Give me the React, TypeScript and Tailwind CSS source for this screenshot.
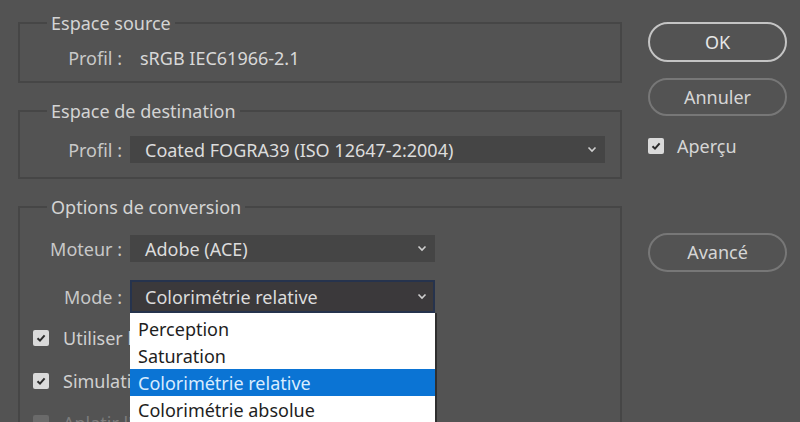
import React from "react";

const font = { fontFamily: '"Noto Sans", "Open Sans", sans-serif' };

function Chevron() {
  return (
    <svg width="10" height="7" viewBox="0 0 10 7" className="shrink-0">
      <polyline points="1.5,1.5 5,5 8.5,1.5" fill="none" stroke="#cfcfcf" strokeWidth="1.6" />
    </svg>
  );
}

function Box({ checked = true, dim = false }: { checked?: boolean; dim?: boolean }) {
  return (
    <div
      className={`w-[16px] h-[16px] rounded-[2px] flex items-center justify-center shrink-0 ${
        dim ? "bg-[#6a6a6a]" : "bg-[#dadada]"
      }`}
    >
      {checked && (
        <svg width="12" height="12" viewBox="0 0 12 12">
          <polyline points="2.5,6.2 5,8.6 9.6,3.4" fill="none" stroke="#2b2b2b" strokeWidth="2" />
        </svg>
      )}
    </div>
  );
}

function Legend({ children }: { children: React.ReactNode }) {
  return (
    <legend className="ml-[27px] px-[4px] text-[18px] leading-[24px] text-[#d4d4d4]">{children}</legend>
  );
}

function Label({ children }: { children: React.ReactNode }) {
  return <div className="w-[102px] text-right text-[18px] leading-[24px] text-[#c8c8c8]">{children}</div>;
}

export default function App() {
  return (
    <div className="w-[800px] h-[422px] bg-[#535353] overflow-hidden flex" style={font}>
      {/* Left column */}
      <div className="w-[604px] ml-[18px] flex flex-col shrink-0">
        <fieldset className="mt-[11px] border-2 border-[#464646] px-0 pt-[11px] pb-[11px]">
          <Legend>Espace source</Legend>
          <div className="flex items-center h-[24px]">
            <Label>Profil :</Label>
            <div className="ml-[18px] text-[18px] leading-[24px] text-[#d8d8d8]">sRGB IEC61966-2.1</div>
          </div>
        </fieldset>

        <fieldset className="mt-[16px] border-2 border-[#464646] pt-[13px] pb-[14px]">
          <Legend>Espace de destination</Legend>
          <div className="flex items-center">
            <Label>Profil :</Label>
            <div className="ml-[8px] w-[475px] h-[27px] bg-[#454545] flex items-center justify-between pl-[15px] pr-[8px]">
              <span className="text-[18px] leading-[24px] text-[#dcdcdc]">Coated FOGRA39 (ISO 12647-2:2004)</span>
              <Chevron />
            </div>
          </div>
        </fieldset>

        <fieldset className="mt-[16px] border-2 border-[#464646] pt-[16px] flex-1">
          <Legend>Options de conversion</Legend>
          <div className="flex items-center">
            <Label>Moteur :</Label>
            <div className="ml-[8px] w-[305px] h-[27px] bg-[#454545] flex items-center justify-between pl-[15px] pr-[8px]">
              <span className="text-[18px] leading-[24px] text-[#dcdcdc]">Adobe (ACE)</span>
              <Chevron />
            </div>
          </div>
          <div className="flex items-center mt-[18px]">
            <Label>Mode :</Label>
            <div className="relative ml-[8px] w-[305px] h-[33px]">
              <div className="w-full h-full bg-[#3b393b] border-2 border-[#26334d] flex items-center justify-between pl-[13px] pr-[6px]">
                <span className="text-[18px] leading-[24px] text-[#dcdcdc]">Colorimétrie relative</span>
                <Chevron />
              </div>
              <div className="absolute left-0 top-full w-[307px] bg-white border-r-2 border-[#2f2f2f] z-10 pt-[2px]">
                <div className="h-[27px] flex items-center pl-[8px] text-[18px] leading-[24px] text-[#1e1e1e]">Perception</div>
                <div className="h-[27px] flex items-center pl-[8px] text-[18px] leading-[24px] text-[#1e1e1e]">Saturation</div>
                <div className="h-[27px] flex items-center pl-[8px] text-[18px] leading-[24px] text-[#d8ecff] bg-[#0b74d4]">
                  Colorimétrie relative
                </div>
                <div className="h-[27px] flex items-center pl-[8px] text-[18px] leading-[24px] text-[#1e1e1e]">
                  Colorimétrie absolue
                </div>
              </div>
            </div>
          </div>
          <div className="flex items-center h-[24px] mt-[13px] ml-[13px] gap-[14px]">
            <Box />
            <span className="text-[18px] leading-[24px] text-[#d0d0d0] whitespace-nowrap">
              Utiliser la compensation du point noir
            </span>
          </div>
          <div className="flex items-center h-[24px] mt-[19px] ml-[13px] gap-[14px]">
            <Box />
            <span className="text-[18px] leading-[24px] text-[#d0d0d0] whitespace-nowrap">
              Simulation (images 8 bits/couche)
            </span>
          </div>
          <div className="flex items-center h-[24px] mt-[18px] ml-[13px] gap-[14px]">
            <Box checked={false} dim />
            <span className="text-[18px] leading-[24px] text-[#7c7c7c] whitespace-nowrap">
              Aplatir l'image pour préserver l'aspect
            </span>
          </div>
        </fieldset>
      </div>

      {/* Right column */}
      <div className="ml-[26px] w-[139px] flex flex-col shrink-0">
        <button className="mt-[22px] h-[40px] rounded-full border-2 border-[#c4c4c4] text-[18px] text-[#e6e6e6]">
          OK
        </button>
        <button className="mt-[16px] h-[38px] rounded-full border-2 border-[#777777] text-[18px] text-[#d6d6d6]">
          Annuler
        </button>
        <div className="mt-[18px] h-[24px] flex items-center gap-[13px]">
          <Box />
          <span className="text-[18px] leading-[24px] text-[#d6d6d6]">Aperçu</span>
        </div>
        <button className="mt-[75px] h-[39px] rounded-full border-2 border-[#777777] text-[18px] text-[#d6d6d6]">
          Avancé
        </button>
      </div>
    </div>
  );
}
